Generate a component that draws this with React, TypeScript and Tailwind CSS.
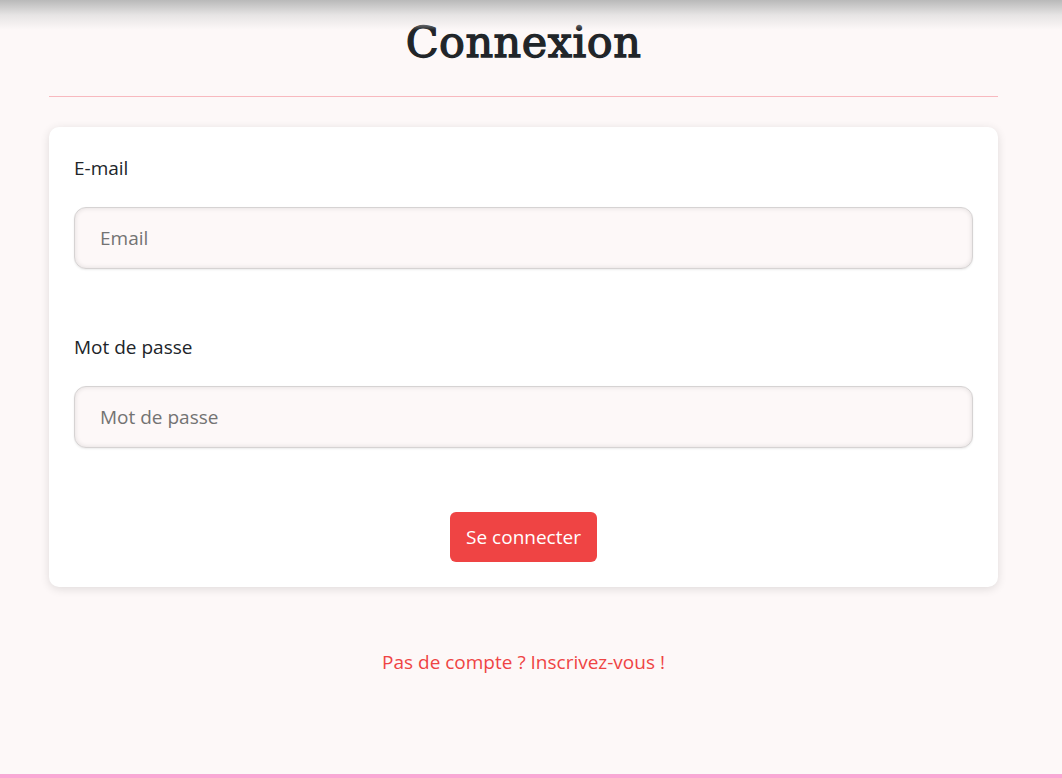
export default function App() {
  return (
    <div className="min-h-screen bg-[#fdf8f8] flex flex-col font-['Open_Sans',sans-serif] text-[19px] text-[#212529]">
      {/* shadow of the navbar sitting above the viewport */}
      <div className="pointer-events-none absolute inset-x-0 top-0 h-[30px] bg-gradient-to-b from-[#b9b9b9] via-[#e6e4e4] to-transparent" />

      <main className="flex-1 pl-[49px] pr-[64px]">
        <h1 className="pt-[10px] text-center font-['DejaVu_Serif',serif] text-[43px] font-normal leading-[64px] tracking-[0.5px] text-[#212529] [-webkit-text-stroke:1.3px_#212529]">
          Connexion
        </h1>
        <hr className="mt-[22px] border-0 border-t border-[#f8b9bf]" />

        <form className="mt-[30px] rounded-[10px] bg-white px-[25px] pt-[28px] pb-[25px] shadow-[0_2px_10px_rgba(0,0,0,0.12)]">
          <label className="block leading-[27px]">E-mail</label>
          <input
            type="email"
            placeholder="Email"
            className="mt-[25px] block h-[62px] w-full rounded-[12px] border border-[#d6d3d3] bg-[#fdf8f8] px-[25px] text-[19px] shadow-[inset_0_0_5px_rgba(0,0,0,0.12),0_1px_2px_rgba(0,0,0,0.08)] outline-none placeholder:text-[#737373]"
          />

          <label className="mt-[65px] block leading-[27px]">Mot de passe</label>
          <input
            type="password"
            placeholder="Mot de passe"
            className="mt-[25px] block h-[62px] w-full rounded-[12px] border border-[#d6d3d3] bg-[#fdf8f8] px-[25px] text-[19px] shadow-[inset_0_0_5px_rgba(0,0,0,0.12),0_1px_2px_rgba(0,0,0,0.08)] outline-none placeholder:text-[#737373]"
          />

          <div className="mt-[64px] flex justify-center">
            <button
              type="button"
              className="h-[50px] rounded-[6px] bg-[#ef4444] px-[16px] text-[19px] text-white"
            >
              Se connecter
            </button>
          </div>
        </form>

        <p className="mt-[62px] text-center text-[19px] leading-[27px] text-[#ef4444]">
          Pas de compte ? Inscrivez-vous !
        </p>
      </main>

      <footer className="h-[4px] bg-[#f9a8d4]" />
    </div>
  );
}
